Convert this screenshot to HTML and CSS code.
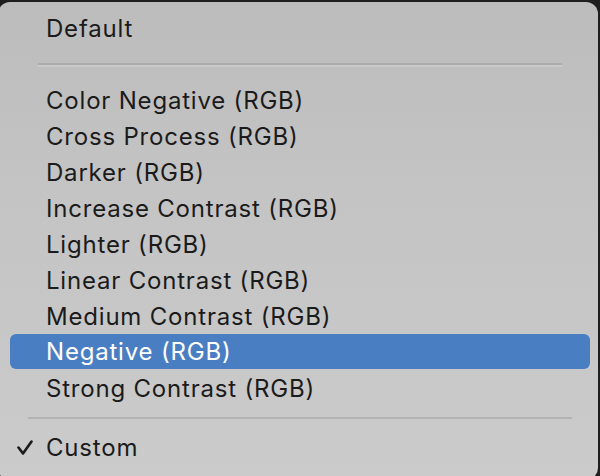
FILE: index.html
```html
<!DOCTYPE html>
<html>
<head>
<meta charset="utf-8">
<link rel="stylesheet" href="styles.css">
</head>
<body>
<div class="menu">
  <div class="item first"><span class="label">Default</span></div>
  <div class="sep sep-top"><div class="line"></div></div>
  <div class="item"><span class="label">Color Negative (RGB)</span></div>
  <div class="item"><span class="label">Cross Process (RGB)</span></div>
  <div class="item"><span class="label">Darker (RGB)</span></div>
  <div class="item"><span class="label">Increase Contrast (RGB)</span></div>
  <div class="item"><span class="label">Lighter (RGB)</span></div>
  <div class="item"><span class="label">Linear Contrast (RGB)</span></div>
  <div class="item"><span class="label">Medium Contrast (RGB)</span></div>
  <div class="item selected"><span class="label">Negative (RGB)</span></div>
  <div class="item"><span class="label">Strong Contrast (RGB)</span></div>
  <div class="sep sep-bottom"><div class="line"></div></div>
  <div class="item checked">
    <svg class="check" width="16" height="16" viewBox="0 0 16 16"><path d="M1.5 7.5 L6 13.5 L14.5 1.5" fill="none" stroke="#1b1b1b" stroke-width="2.6" stroke-linecap="round" stroke-linejoin="round"/></svg>
    <span class="label">Custom</span>
  </div>
</div>
</body>
</html>
```

FILE: styles.css
```css
html, body {
  margin: 0;
  padding: 0;
  background: #1e1e1e;
  width: 600px;
  height: 476px;
  overflow: hidden;
}
.menu {
  box-sizing: border-box;
  margin: 2px 0 0 -2px;
  width: 600px;
  height: 478px;
  border-radius: 12px;
  background: linear-gradient(180deg, #bcbcbc 0%, #c4c4c4 40%, #cbcbcb 100%);
  padding: 8px 8px 0 12px;
  display: flex;
  flex-direction: column;
  font-family: "Inter", "Liberation Sans", sans-serif;
  font-size: 24px;
  color: #1b1b1b;
}
.item {
  position: relative;
  height: 36px;
  display: flex;
  align-items: center;
  padding-left: 36px;
  border-radius: 6px;
  letter-spacing: 0.8px;
}
.item.selected {
  height: 35px;
  margin: 0 0 1px;
  background: #4a7ec3;
  color: #ffffff;
}
.sep {
  display: flex;
  align-items: center;
}
.sep-top {
  height: 36px;
  padding: 0 28px 0 28px;
}
.sep-top .line {
  flex: 1;
  height: 2px;
  background: #adadad;
  box-shadow: 0 2px 0 #cacaca;
}
.sep-bottom {
  height: 23px;
  padding: 0 18px 0 18px;
}
.sep-bottom .line {
  flex: 1;
  height: 2px;
  background: #b3b3b3;
}
.check {
  position: absolute;
  left: 7px;
  top: 11px;
}
```
